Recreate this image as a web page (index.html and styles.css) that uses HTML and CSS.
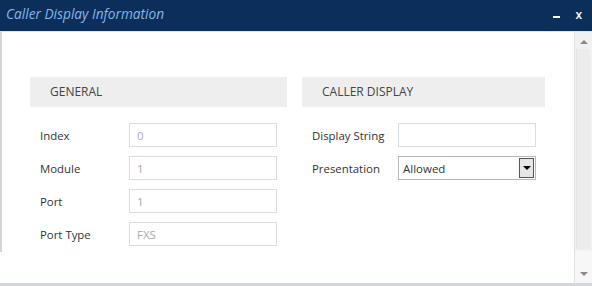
FILE: index.html
```html
<!DOCTYPE html>
<html lang="en">
<head>
    <meta charset="UTF-8">
    <title>Caller Display Information</title>
    <link rel="stylesheet" href="styles.css">
</head>
<body>
    <div class="dialog">
        <div class="titlebar">
            <span class="title">Caller Display Information</span>
            <div class="controls">
                <span class="minimize"></span>
                <span class="close">x</span>
            </div>
        </div>

        <div class="body">
            <div class="content">
                <div class="frame">
                    <div class="group group-general">
                        <div class="group-head">GENERAL</div>
                        <div class="row">
                            <label>Index</label>
                            <div class="field readonly">0</div>
                        </div>
                        <div class="row">
                            <label>Module</label>
                            <div class="field readonly">1</div>
                        </div>
                        <div class="row">
                            <label>Port</label>
                            <div class="field readonly">1</div>
                        </div>
                        <div class="row">
                            <label>Port Type</label>
                            <div class="field readonly">FXS</div>
                        </div>
                    </div>

                    <div class="group group-caller">
                        <div class="group-head">CALLER DISPLAY</div>
                        <div class="row">
                            <label>Display String</label>
                            <div class="field"></div>
                        </div>
                        <div class="row">
                            <label>Presentation</label>
                            <div class="field select">
                                <span>Allowed</span>
                                <span class="drop"><span class="arrow"></span></span>
                            </div>
                        </div>
                    </div>
                </div>
            </div>

            <div class="scrollbar">
                <div class="sb-btn"><span class="sb-up"></span></div>
                <div class="sb-thumb"></div>
                <div class="sb-btn sb-bottom"><span class="sb-down"></span></div>
            </div>
        </div>
    </div>
</body>
</html>
```

FILE: styles.css
```css
body {
    margin: 0;
    font-family: "Open Sans", "Noto Sans", sans-serif;
    background: #fff;
}

.dialog {
    width: 592px;
    height: 286px;
    display: flex;
    flex-direction: column;
    overflow: hidden;
}

.titlebar {
    height: 31px;
    flex: none;
    background: #0b2f5a;
    border-bottom: 1px solid #dfe4ea;
    display: flex;
    align-items: center;
    justify-content: space-between;
}

.title {
    font-style: italic;
    font-size: 13.7px;
    color: #86b5ea;
    margin-left: 6px;
    margin-top: -5px;
}

.controls {
    display: flex;
    align-items: center;
    margin-right: 10px;
}

.minimize {
    width: 7px;
    height: 2px;
    background: #fff;
    margin-top: 3px;
    margin-right: 15px;
}

.close {
    color: #fff;
    font-size: 12px;
    font-weight: 600;
    margin-top: -2px;
}

.body {
    flex: 1;
    display: flex;
    border-bottom: 3px solid #d3d7db;
}

.content {
    flex: 1;
}

.frame {
    height: 220px;
    border-left: 2px solid #d3d7db;
    padding: 45px 0 0 28px;
    box-sizing: border-box;
    display: flex;
    gap: 15px;
}

.group-general {
    width: 257px;
}

.group-caller {
    width: 243px;
}

.group-head {
    height: 30px;
    line-height: 30px;
    background: #eeeeee;
    padding-left: 20px;
    font-size: 12px;
    color: #444;
    margin-bottom: 16px;
}

.row {
    display: flex;
    align-items: center;
    padding-left: 10px;
    margin-bottom: 9px;
}

.row label {
    font-size: 11.4px;
    color: #333;
    padding-top: 1px;
}

.group-general label {
    width: 89px;
}

.group-caller label {
    width: 86px;
}

.field {
    height: 24px;
    box-sizing: border-box;
    border: 1px solid #dcdcdc;
    font-size: 11.5px;
    line-height: 24px;
    padding-left: 7px;
    color: #333;
    background: #fff;
}

.group-general .field {
    width: 148px;
}

.group-caller .field {
    width: 138px;
}

.readonly {
    color: #a8a8a8;
}

.field.select {
    display: flex;
    justify-content: space-between;
    padding-left: 4px;
    border-color: #b8b8b8;
}

.drop {
    width: 15px;
    height: 20px;
    margin: 1px;
    box-sizing: border-box;
    border: 1px solid #555;
    background: #e6e6e6;
    display: flex;
    align-items: center;
    justify-content: center;
}

.arrow {
    width: 0;
    height: 0;
    border-left: 4px solid transparent;
    border-right: 4px solid transparent;
    border-top: 4px solid #000;
}

.scrollbar {
    width: 17px;
    flex: none;
    background: #f1f1f1;
    border-left: 1px solid #e2e2e2;
    display: flex;
    flex-direction: column;
}

.sb-btn {
    height: 17px;
    display: flex;
    align-items: center;
    justify-content: center;
}

.sb-bottom {
    margin-top: auto;
    height: 32px;
    background: #f7f7f7;
    align-items: flex-end;
    padding-bottom: 7px;
    box-sizing: border-box;
}

.sb-thumb {
    height: 200px;
    margin: 0 2px 0 1px;
    background: #ececec;
    border-left: 1px solid #e4e4e4;
}

.sb-up {
    width: 0;
    height: 0;
    border-left: 4px solid transparent;
    border-right: 4px solid transparent;
    border-bottom: 4px solid #888;
    margin-top: 2px;
}

.sb-down {
    width: 0;
    height: 0;
    border-left: 4px solid transparent;
    border-right: 4px solid transparent;
    border-top: 4px solid #888;
}
```
